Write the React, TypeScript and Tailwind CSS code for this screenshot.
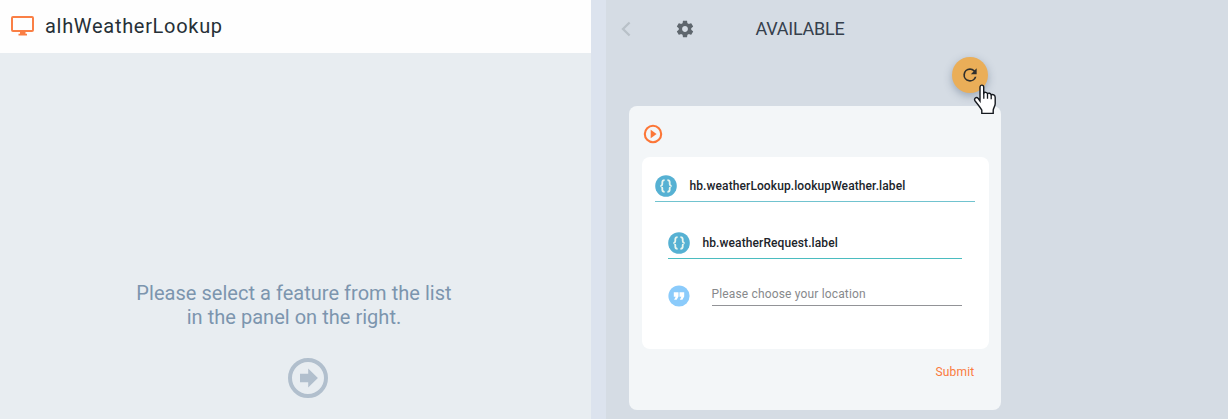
function Braces() {
  return (
    <svg className="block h-[22px] w-[22px] shrink-0" viewBox="0 0 22 22" fill="none">
      <circle cx="11" cy="11" r="10.8" fill="#56b1d3" />
      <path
        d="M9.6 5.2c-1.9 0-2.3.7-2.3 2v1.8c0 1.2-.5 1.8-1.8 2 1.3.2 1.8.8 1.8 2v1.8c0 1.3.4 2 2.3 2M12.4 5.2c1.9 0 2.3.7 2.3 2v1.8c0 1.2.5 1.8 1.8 2-1.3.2-1.8.8-1.8 2v1.8c0 1.3-.4 2-2.3 2"
        stroke="#e9f6ef"
        strokeWidth="1.8"
      />
    </svg>
  );
}

function LeftPanel() {
  return (
    <section className="flex w-[591px] shrink-0 flex-col bg-[#e8edf1]">
      <header className="flex h-[53px] items-center bg-[#fefefe] pb-px pl-[11px]">
        <svg className="block h-[22px] w-[24px]" viewBox="0 0 24 22">
          <rect x="1" y="2" width="21" height="14" rx="1" fill="none" stroke="#fa7f45" strokeWidth="2" />
          <path d="M9 16.5h5.5v2.2H16v1.8H7.5v-1.8H9z" fill="#fa7f45" />
        </svg>
        <h1 className="ml-[10px] text-[20px] leading-[24px] tracking-[0.7px] text-[#263037]">alhWeatherLookup</h1>
      </header>
      <div className="flex flex-col pt-[228px]">
        <p className="w-[588px] text-center text-[20px] leading-[24px] tracking-[0.03px] text-[#7c95ae]">
          Please select a feature from the list
          <br />
          in the panel on the right.
        </p>
        <svg className="mt-[29px] ml-[288px] block h-[40px] w-[40px]" viewBox="0 0 40 40">
          <circle cx="20" cy="20" r="18" fill="none" stroke="#b1bfcd" strokeWidth="4" />
          <path d="M12 15.8h8.2V10.5l9.7 9.5-9.7 9.5v-5.3H12z" fill="#b1bfcd" />
        </svg>
      </div>
    </section>
  );
}

function FeatureCard() {
  return (
    <div className="ml-[23px] h-[304px] w-[372px] rounded-[8px] bg-[#f3f6f8] px-[13px] pt-[18px]">
      <svg className="ml-[1px] block h-[20px] w-[20px]" viewBox="0 0 20 20">
        <circle cx="10" cy="10" r="8.2" fill="none" stroke="#fc7637" strokeWidth="2.1" />
        <path d="M7.7 5.8l5.9 4.2-5.9 4.2z" fill="#fc7637" />
      </svg>
      <div className="mt-[13px] h-[192px] w-[347px] rounded-[8px] bg-white px-[13px] pt-[18px]">
        <div className="flex h-[27px] w-[320px] items-start border-b border-[#71c3cf]">
          <Braces />
          <span className="ml-[12.5px] text-[12px] leading-[22px] font-medium tracking-[0.1px] text-[#20242a]">
            hb.weatherLookup.lookupWeather.label
          </span>
        </div>
        <div className="mt-[30px] ml-[13px] flex h-[27px] w-[294px] items-start border-b border-[#4bbcc0]">
          <Braces />
          <span className="ml-[12.5px] text-[12px] leading-[22px] font-medium tracking-[0.1px] text-[#20242a]">
            hb.weatherRequest.label
          </span>
        </div>
        <div className="mt-[26px] ml-[13px] flex w-[294px] items-start">
          <svg className="block h-[22px] w-[22px] shrink-0" viewBox="0 0 22 22">
            <circle cx="11" cy="11" r="10.6" fill="#8bcbfb" />
            <path d="M5.8 7.2h4.7v4.4l-1.8 3.2H6.1l1.6-3.1H5.8zM11.5 7.2h4.7v4.4l-1.8 3.2h-2.6l1.6-3.1h-1.9z" fill="#fff" />
          </svg>
          <div className="ml-[21.5px] h-[21px] flex-1 border-b border-[#929397] text-[12px] leading-[18px] tracking-[0.16px] text-[#87898c]">
            Please choose your location
          </div>
        </div>
      </div>
      <button className="mt-[14px] mr-[13.5px] ml-auto block text-[12px] leading-[18px] tracking-[0.2px] text-[#fb7a3c]">
        Submit
      </button>
    </div>
  );
}

function RightPanel() {
  return (
    <section className="flex flex-1 flex-col bg-[#d5dce4]">
      <header className="flex h-[57px] shrink-0 items-center">
        <svg className="ml-[14px] block h-[16px] w-[12px]" viewBox="0 0 12 16" fill="none">
          <path d="M9.6 1.5L3 8l6.6 6.5" stroke="#b9c1c8" strokeWidth="2.3" />
        </svg>
        <svg className="ml-[43px] block h-[20px] w-[20px]" viewBox="0 0 24 24" fill="#5e666d">
          <path d="M19.43 12.98c.04-.32.07-.64.07-.98s-.03-.66-.07-.98l2.11-1.65c.19-.15.24-.42.12-.64l-2-3.46c-.12-.22-.39-.3-.61-.22l-2.49 1c-.52-.4-1.08-.73-1.69-.98l-.38-2.65C14.46 2.18 14.25 2 14 2h-4c-.25 0-.46.18-.49.42l-.38 2.65c-.61.25-1.17.59-1.69.98l-2.49-1c-.23-.09-.49 0-.61.22l-2 3.46c-.13.22-.07.49.12.64l2.11 1.65c-.04.32-.07.65-.07.98s.03.66.07.98l-2.11 1.65c-.19.15-.24.42-.12.64l2 3.46c.12.22.39.3.61.22l2.49-1c.52.4 1.08.73 1.69.98l.38 2.65c.03.24.24.42.49.42h4c.25 0 .46-.18.49-.42l.38-2.65c.61-.25 1.17-.59 1.69-.98l2.49 1c.23.09.49 0 .61-.22l2-3.46c.12-.22.07-.49-.12-.64zM12 15.5c-1.93 0-3.5-1.57-3.5-3.5s1.57-3.5 3.5-3.5 3.5 1.57 3.5 3.5-1.57 3.5-3.5 3.5z" />
        </svg>
        <h2 className="ml-[60.5px] text-[18px] leading-[22px] tracking-[-0.25px] text-[#35404c]">AVAILABLE</h2>
      </header>
      <div className="relative mb-[13px] ml-[346px] h-[36px] w-[36px] shrink-0">
        <button className="flex h-[36px] w-[36px] items-center justify-center rounded-full bg-[#eaae58] pb-px shadow-[0_3px_9px_rgba(70,90,115,0.4)]">
          <svg className="block h-[20px] w-[20px]" viewBox="0 0 24 24" fill="#30302d">
            <path d="M17.65 6.35A7.96 7.96 0 0 0 12 4a8 8 0 1 0 7.73 10h-2.08A6 6 0 1 1 12 6c1.66 0 3.14.69 4.22 1.78L13 11h7V4z" />
          </svg>
        </button>
        <svg className="absolute top-[27px] left-[21px] h-[32px] w-[24px]" viewBox="0 0 24 32">
          <path
            d="M7 17V3.2C7 .4 10.7.4 10.7 3.2V9c.8-1.2 3.2-.8 3.8.7 1.1-1 3.2-.5 3.7 1.1 1.7-.8 4 .3 4 2.7v6.2c0 2.6-2 4.2-2 6.8v2.9H8.8v-3.2C7.5 23.8 5.3 21 2.3 17.3c-2-2.7 1-5 3-2.8z"
            fill="#fff"
            stroke="#15191f"
            strokeWidth="1.4"
          />
          <path d="M10.8 9v5.7M14.5 9.7v5M18.2 10.8v4.4" stroke="#15191f" strokeWidth="1.3" />
        </svg>
      </div>
      <FeatureCard />
    </section>
  );
}

export default function App() {
  return (
    <main className="flex h-[419px] w-[1228px] overflow-hidden bg-[#dce3ee] font-['Roboto',sans-serif]">
      <LeftPanel />
      <div className="w-[15px] shrink-0" />
      <RightPanel />
    </main>
  );
}
